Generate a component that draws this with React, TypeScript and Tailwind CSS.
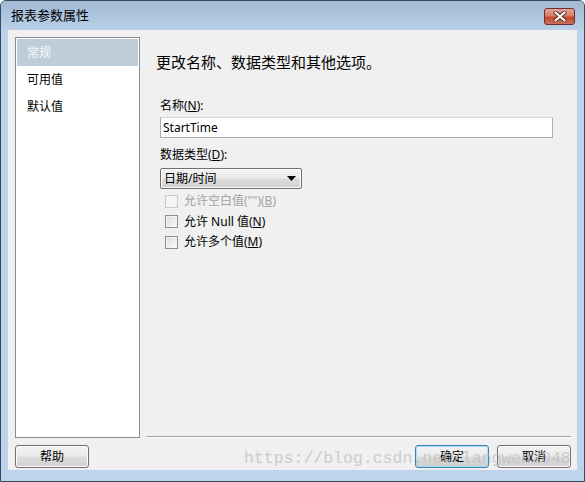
import React from "react";

const ui = { fontFamily: '"Noto Sans", "Noto Sans CJK SC", sans-serif' };

function CheckRow({ label, disabled }: { label: React.ReactNode; disabled?: boolean }) {
  return (
    <div className="flex items-center h-[20.5px]">
      <span
        className={
          disabled
            ? "w-[13px] h-[13px] ml-[9px] border border-[#c9c9c9] bg-[#f4f4f4]"
            : "w-[13px] h-[13px] ml-[9px] border border-[#8e8f8f] bg-gradient-to-br from-[#dcdcdc] to-[#fbfbfb] shadow-[inset_0_0_0_1px_#f4f4f4]"
        }
      />
      <span className={disabled ? "ml-[6px] text-[12px] text-[#a3a3a3]" : "ml-[6px] text-[12px] text-black"}>
        {label}
      </span>
    </div>
  );
}

function Btn({ children, primary }: { children: React.ReactNode; primary?: boolean }) {
  return (
    <button
      type="button"
      className={
        "w-[74px] h-[23px] rounded-[3px] border text-[12px] text-black flex items-center justify-center bg-[linear-gradient(#f2f2f2_0%,#ebebeb_48%,#dddddd_52%,#cfcfcf_100%)] " +
        (primary
          ? "border-[#3c7fb1] shadow-[inset_0_0_0_1px_#a6e1fb]"
          : "border-[#707070] shadow-[inset_0_0_0_1px_#fbfbfb]")
      }
    >
      {children}
    </button>
  );
}

export default function App() {
  return (
    <div className="w-[585px] h-[482px] bg-white" style={ui}>
      <div className="relative w-[585px] h-[482px] rounded-t-[6px] border border-[#35495f] bg-[#bdd4ec] flex flex-col overflow-hidden">
        {/* title bar */}
        <div className="h-[29px] flex items-center justify-between pl-[10px] pr-[9px] bg-[linear-gradient(#a2b9d4,#b9d0e8)]">
          <span className="text-[13px] text-black pt-[1px]">报表参数属性</span>
          <button
            type="button"
            className="w-[31px] h-[17px] mt-[2px] rounded-[3px] border border-[#6b2d2d] bg-[linear-gradient(#e4a699_0%,#d77b66_48%,#c3452c_52%,#d0705a_100%)] flex items-center justify-center"
          >
            <svg width="14" height="11" viewBox="0 0 14 11">
              <path d="M2.5 1.5 L11.5 9.5 M11.5 1.5 L2.5 9.5" stroke="#5a2a22" strokeWidth="4" strokeLinecap="round" />
              <path d="M2.5 1.5 L11.5 9.5 M11.5 1.5 L2.5 9.5" stroke="#ffffff" strokeWidth="2.2" strokeLinecap="round" />
            </svg>
          </button>
        </div>

        {/* client area */}
        <div className="mx-[7px] h-[440px] bg-[#f0f0f0] flex flex-col pl-[7px] pr-[6px] pt-[7px]">
          <div className="flex h-[401px]">
            {/* left list */}
            <div className="w-[125px] h-full border border-[#8a8d92] bg-white p-px">
              <div className="h-[27px] bg-[#bfcddb] text-[#f6f8fa] text-[12px] flex items-center pl-[10px]">常规</div>
              <div className="h-[27px] text-[12px] text-black flex items-center pl-[10px]">可用值</div>
              <div className="h-[27px] text-[12px] text-black flex items-center pl-[10px]">默认值</div>
            </div>

            {/* right panel */}
            <div className="flex-1 ml-[6px] flex flex-col">
              <div className="flex-1 pl-[10px]">
                <div className="text-[15px] text-black mt-[15px] leading-[20px]">更改名称、数据类型和其他选项。</div>

                <div className="pl-[4px] mt-[26px] text-[12px] text-black leading-[16px]">
                  名称(<u>N</u>):
                </div>
                <div className="ml-[4px] mt-[3px] w-[393px] h-[21px] border border-[#abadb3] border-t-[#d5d5d5] bg-white text-[12px] flex items-center pl-[2px] text-black">
                  StartTime
                </div>

                <div className="pl-[4px] mt-[9px] text-[12px] text-black leading-[16px]">
                  数据类型(<u>D</u>):
                </div>
                <div className="ml-[4px] mt-[5px] w-[142px] h-[21px] rounded-[2px] border border-[#707070] bg-[linear-gradient(#f2f2f2_0%,#ebebeb_48%,#dddddd_52%,#cfcfcf_100%)] shadow-[inset_0_0_0_1px_#fcfcfc] flex items-center justify-between pl-[3px] pr-[5px] text-[12px] text-black">
                  <span>日期/时间</span>
                  <svg width="9" height="5" viewBox="0 0 9 5">
                    <path d="M0 0 H9 L4.5 5 Z" fill="#000" />
                  </svg>
                </div>

                <div className="mt-[2px]">
                  <CheckRow disabled label={<>允许空白值("")(<u>B</u>)</>} />
                  <CheckRow label={<>允许 Null 值(<u>N</u>)</>} />
                  <CheckRow label={<>允许多个值(<u>M</u>)</>} />
                </div>
              </div>
              <div className="h-px bg-[#a0a0a0]" />
              <div className="h-px bg-white" />
            </div>
          </div>

          {/* buttons */}
          <div className="flex items-center mt-[7px]">
            <Btn>帮助</Btn>
            <div className="flex-1" />
            <Btn primary>确定</Btn>
            <div className="w-[8px]" />
            <Btn>取消</Btn>
          </div>
        </div>

        {/* watermark */}
        <div
          className="absolute left-[243px] top-[447px] text-[16.5px] leading-[22px] text-[#bdbdbd] opacity-70 pointer-events-none whitespace-nowrap"
          style={{ fontFamily: '"Liberation Mono", monospace' }}
        >
          https://blog.csdn.net/langwen2048
        </div>
      </div>
    </div>
  );
}
